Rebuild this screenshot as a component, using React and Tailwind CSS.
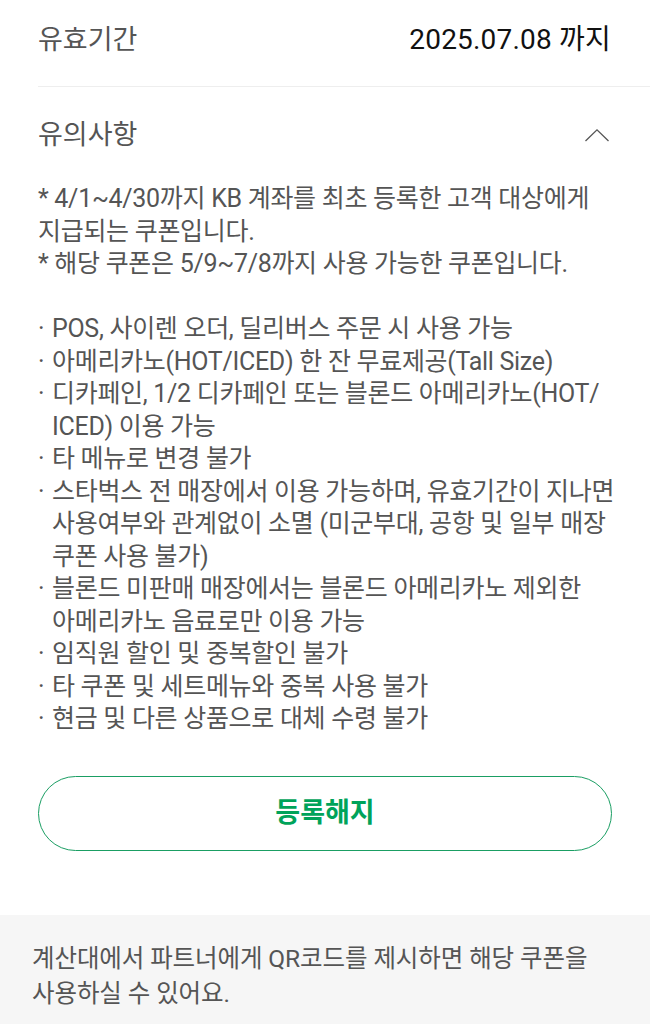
import React from "react";

const font = { fontFamily: '"Roboto", "Noto Sans CJK KR", sans-serif' };

const lines = [
  { t: "* 4/1~4/30까지 KB 계좌를 최초 등록한 고객 대상에게" },
  { t: "지급되는 쿠폰입니다." },
  { t: "* 해당 쿠폰은 5/9~7/8까지 사용 가능한 쿠폰입니다." },
  { t: "\u00a0" },
  { b: true, t: "POS, 사이렌 오더, 딜리버스 주문 시 사용 가능" },
  { b: true, t: "아메리카노(HOT/ICED) 한 잔 무료제공(Tall Size)" },
  { b: true, t: "디카페인, 1/2 디카페인 또는 블론드 아메리카노(HOT/" },
  { i: true, t: "ICED) 이용 가능" },
  { b: true, t: "타 메뉴로 변경 불가" },
  { b: true, t: "스타벅스 전 매장에서 이용 가능하며, 유효기간이 지나면" },
  { i: true, t: "사용여부와 관계없이 소멸 (미군부대, 공항 및 일부 매장" },
  { i: true, t: "쿠폰 사용 불가)" },
  { b: true, t: "블론드 미판매 매장에서는 블론드 아메리카노 제외한" },
  { i: true, t: "아메리카노 음료로만 이용 가능" },
  { b: true, t: "임직원 할인 및 중복할인 불가" },
  { b: true, t: "타 쿠폰 및 세트메뉴와 중복 사용 불가" },
  { b: true, t: "현금 및 다른 상품으로 대체 수령 불가" },
];

export default function App() {
  return (
    <div className="w-full bg-white overflow-hidden" style={font}>
      <div className="ml-[38px] border-b border-[#eeeeee]">
        <div className="h-[86px] pb-[6px] pr-[39px] flex items-center justify-between">
          <span className="text-[27px] text-[#555555]">유효기간</span>
          <span className="text-[28px] text-[#111111] tracking-[0.2px]">2025.07.08 까지</span>
        </div>
      </div>
      <div className="px-[38px]">
        <div className="h-[96px] flex items-center justify-between">
          <span className="text-[27px] text-[#555555]">유의사항</span>
          <svg width="26" height="14" viewBox="0 0 26 14" className="mr-[2px]">
            <path d="M1.5 13 L13 1.8 L24.5 13" fill="none" stroke="#555" strokeWidth="1.3" />
          </svg>
        </div>
        <div className="text-[25px] leading-[32.5px] text-[#555555] tracking-[-0.3px]">
          {lines.map((l, idx) => (
            <div key={idx} className="whitespace-nowrap flex">
              {l.b ? <span className="w-[14px] shrink-0">·</span> : null}
              {l.i ? <span className="w-[14px] shrink-0" /> : null}
              <span>{l.t}</span>
            </div>
          ))}
        </div>
        <div className="mt-[40px] h-[75px] rounded-full border border-[#1a9e63] flex items-center justify-center">
          <span className="text-[27px] font-bold text-[#00a35a]">등록해지</span>
        </div>
      </div>
      <div className="h-[64px]" />
      <div className="bg-[#f6f6f6] px-[32px] pt-[26px] pb-[20px]">
        <p className="text-[24.5px] leading-[35px] text-[#555555] tracking-[-0.1px]">
          계산대에서 파트너에게 QR코드를 제시하면 해당 쿠폰을
          <br />
          사용하실 수 있어요.
        </p>
      </div>
    </div>
  );
}
